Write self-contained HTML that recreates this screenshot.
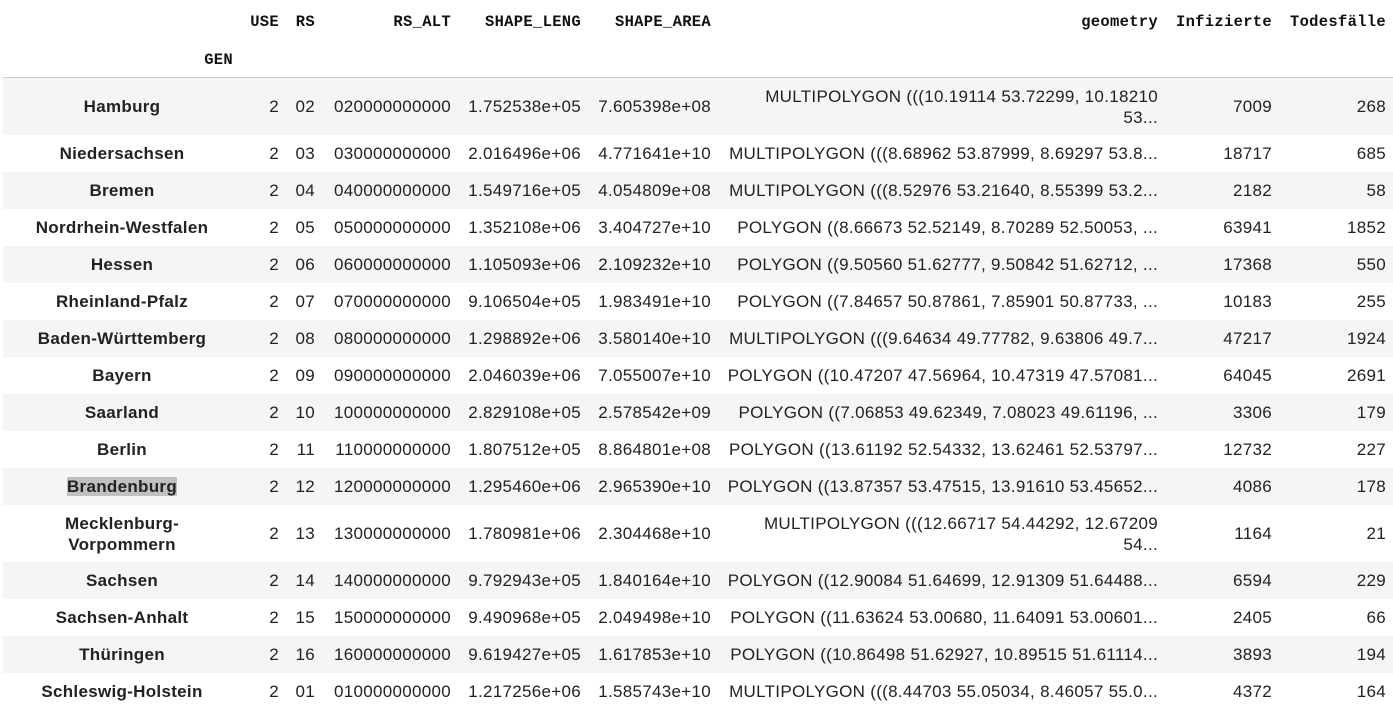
<!DOCTYPE html>
<html><head><meta charset="utf-8"><style>
html,body{margin:0;padding:0;background:#fff;width:1393px;height:715px;overflow:hidden}
table{position:absolute;left:3px;top:0;border-collapse:collapse;table-layout:fixed;width:1391px;font-family:"Liberation Sans",Arial,sans-serif;font-size:17px;letter-spacing:0.3px;color:#222}
td,th{padding:0 8px;text-align:right;white-space:nowrap;line-height:21px;vertical-align:middle}
thead th{font-family:"Liberation Mono",monospace;font-weight:bold;font-size:15.5px;letter-spacing:0.3px;color:#111}
thead tr.h1 th{height:44px}
thead tr.h2 th{height:33px;border-bottom:1px solid #ccc}
tbody th{text-align:center;font-weight:bold}
tbody td,tbody th{height:37px;padding-top:0;padding-bottom:0}
tbody tr.tall td,tbody tr.tall th{height:57px}
tbody tr:nth-child(odd){background:#f5f5f5}
.sel{background:#c0c0c0}
</style></head><body>
<table>
<colgroup><col style="width:238px"><col style="width:46px"><col style="width:36px"><col style="width:136px"><col style="width:130px"><col style="width:130px"><col style="width:447px"><col style="width:114px"><col style="width:114px"></colgroup>
<thead>
<tr class="h1"><th></th><th>USE</th><th>RS</th><th>RS_ALT</th><th>SHAPE_LENG</th><th>SHAPE_AREA</th><th>geometry</th><th>Infizierte</th><th>Todesfälle</th></tr>
<tr class="h2"><th style="text-align:right">GEN</th><th></th><th></th><th></th><th></th><th></th><th></th><th></th><th></th></tr>
</thead>
<tbody>
<tr class="tall"><th>Hamburg</th><td>2</td><td>02</td><td>020000000000</td><td>1.752538e+05</td><td>7.605398e+08</td><td>MULTIPOLYGON (((10.19114 53.72299, 10.18210<br>53...</td><td>7009</td><td>268</td></tr>
<tr><th>Niedersachsen</th><td>2</td><td>03</td><td>030000000000</td><td>2.016496e+06</td><td>4.771641e+10</td><td>MULTIPOLYGON (((8.68962 53.87999, 8.69297 53.8...</td><td>18717</td><td>685</td></tr>
<tr><th>Bremen</th><td>2</td><td>04</td><td>040000000000</td><td>1.549716e+05</td><td>4.054809e+08</td><td>MULTIPOLYGON (((8.52976 53.21640, 8.55399 53.2...</td><td>2182</td><td>58</td></tr>
<tr><th>Nordrhein-Westfalen</th><td>2</td><td>05</td><td>050000000000</td><td>1.352108e+06</td><td>3.404727e+10</td><td>POLYGON ((8.66673 52.52149, 8.70289 52.50053, ...</td><td>63941</td><td>1852</td></tr>
<tr><th>Hessen</th><td>2</td><td>06</td><td>060000000000</td><td>1.105093e+06</td><td>2.109232e+10</td><td>POLYGON ((9.50560 51.62777, 9.50842 51.62712, ...</td><td>17368</td><td>550</td></tr>
<tr><th>Rheinland-Pfalz</th><td>2</td><td>07</td><td>070000000000</td><td>9.106504e+05</td><td>1.983491e+10</td><td>POLYGON ((7.84657 50.87861, 7.85901 50.87733, ...</td><td>10183</td><td>255</td></tr>
<tr><th>Baden-Württemberg</th><td>2</td><td>08</td><td>080000000000</td><td>1.298892e+06</td><td>3.580140e+10</td><td>MULTIPOLYGON (((9.64634 49.77782, 9.63806 49.7...</td><td>47217</td><td>1924</td></tr>
<tr><th>Bayern</th><td>2</td><td>09</td><td>090000000000</td><td>2.046039e+06</td><td>7.055007e+10</td><td>POLYGON ((10.47207 47.56964, 10.47319 47.57081...</td><td>64045</td><td>2691</td></tr>
<tr><th>Saarland</th><td>2</td><td>10</td><td>100000000000</td><td>2.829108e+05</td><td>2.578542e+09</td><td>POLYGON ((7.06853 49.62349, 7.08023 49.61196, ...</td><td>3306</td><td>179</td></tr>
<tr><th>Berlin</th><td>2</td><td>11</td><td>110000000000</td><td>1.807512e+05</td><td>8.864801e+08</td><td>POLYGON ((13.61192 52.54332, 13.62461 52.53797...</td><td>12732</td><td>227</td></tr>
<tr><th><span class="sel">Brandenburg</span></th><td>2</td><td>12</td><td>120000000000</td><td>1.295460e+06</td><td>2.965390e+10</td><td>POLYGON ((13.87357 53.47515, 13.91610 53.45652...</td><td>4086</td><td>178</td></tr>
<tr class="tall"><th>Mecklenburg-<br>Vorpommern</th><td>2</td><td>13</td><td>130000000000</td><td>1.780981e+06</td><td>2.304468e+10</td><td>MULTIPOLYGON (((12.66717 54.44292, 12.67209<br>54...</td><td>1164</td><td>21</td></tr>
<tr><th>Sachsen</th><td>2</td><td>14</td><td>140000000000</td><td>9.792943e+05</td><td>1.840164e+10</td><td>POLYGON ((12.90084 51.64699, 12.91309 51.64488...</td><td>6594</td><td>229</td></tr>
<tr><th>Sachsen-Anhalt</th><td>2</td><td>15</td><td>150000000000</td><td>9.490968e+05</td><td>2.049498e+10</td><td>POLYGON ((11.63624 53.00680, 11.64091 53.00601...</td><td>2405</td><td>66</td></tr>
<tr><th>Thüringen</th><td>2</td><td>16</td><td>160000000000</td><td>9.619427e+05</td><td>1.617853e+10</td><td>POLYGON ((10.86498 51.62927, 10.89515 51.61114...</td><td>3893</td><td>194</td></tr>
<tr><th>Schleswig-Holstein</th><td>2</td><td>01</td><td>010000000000</td><td>1.217256e+06</td><td>1.585743e+10</td><td>MULTIPOLYGON (((8.44703 55.05034, 8.46057 55.0...</td><td>4372</td><td>164</td></tr>
</tbody>
</table>
</body></html>
